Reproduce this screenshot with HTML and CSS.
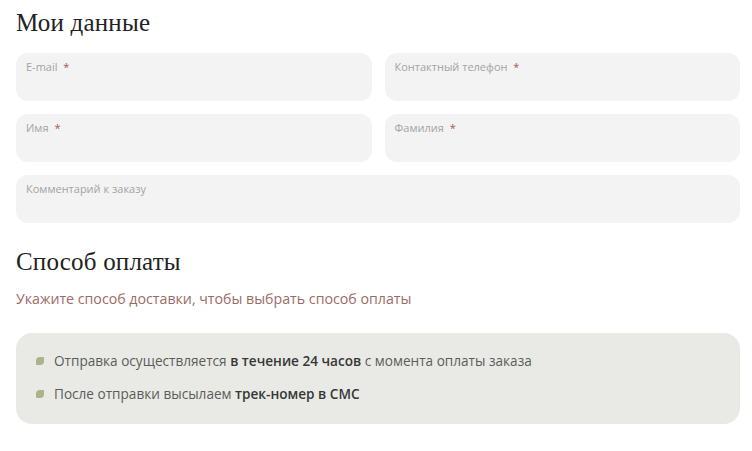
FILE: index.html
```html
<!DOCTYPE html>
<html lang="ru">
<head>
<meta charset="utf-8">
<link rel="stylesheet" href="styles.css">
</head>
<body>
<div class="page">
  <h2 class="title">Мои данные</h2>
  <div class="grid">
    <div class="field"><span class="label">E-mail <i>*</i></span></div>
    <div class="field"><span class="label">Контактный телефон <i>*</i></span></div>
    <div class="field"><span class="label">Имя <i>*</i></span></div>
    <div class="field"><span class="label">Фамилия <i>*</i></span></div>
    <div class="field wide"><span class="label">Комментарий к заказу</span></div>
  </div>
  <h2 class="title title-pay">Способ оплаты</h2>
  <p class="hint">Укажите способ доставки, чтобы выбрать способ оплаты</p>
  <div class="info">
    <div class="item"><span class="leaf"></span><span>Отправка осуществляется <b>в течение 24 часов</b> с момента оплаты заказа</span></div>
    <div class="item"><span class="leaf"></span><span>После отправки высылаем <b>трек-номер в СМС</b></span></div>
  </div>
</div>
</body>
</html>
```
FILE: styles.css
```css
html, body { margin: 0; padding: 0; background: #fff; }
.page { padding: 8px 12px 0 16px; font-family: "Open Sans", "DejaVu Sans", sans-serif; }
.title {
  margin: 0;
  font-family: "Liberation Serif", "DejaVu Serif", serif;
  font-weight: 400;
  font-size: 25px;
  line-height: 30px;
  color: #222;
  letter-spacing: 0.2px;
}
.grid {
  margin-top: 15px;
  display: grid;
  grid-template-columns: 1fr 1fr;
  gap: 13px 13px;
}
.field {
  height: 48px;
  background: #f3f3f3;
  border-radius: 12px;
  padding: 7px 10px 0;
  box-sizing: border-box;
}
.field.wide { grid-column: 1 / 3; }
.label { font-size: 11px; color: #a3a3a3; line-height: 14px; display: block; }
.label i { font-style: normal; color: #a5585a; margin-left: 3px; }
.title-pay { margin-top: 24px; }
.hint { margin: 13px 0 0; font-size: 14.2px; line-height: 18px; color: #9a6b66; }
.info {
  margin-top: 25px;
  background: #e9eae6;
  border-radius: 16px;
  height: 91px;
  box-sizing: border-box;
  padding: 18px 20px;
  display: flex;
  flex-direction: column;
  gap: 14px;
}
.item { display: flex; align-items: center; gap: 10px; font-size: 13.6px; line-height: 19px; color: #5a5d5a; }
.item b { font-weight: 600; color: #353835; }
.leaf { width: 8px; height: 8px; background: #a9b488; border-radius: 4px 1px 4px 1px; flex: none; }
```
